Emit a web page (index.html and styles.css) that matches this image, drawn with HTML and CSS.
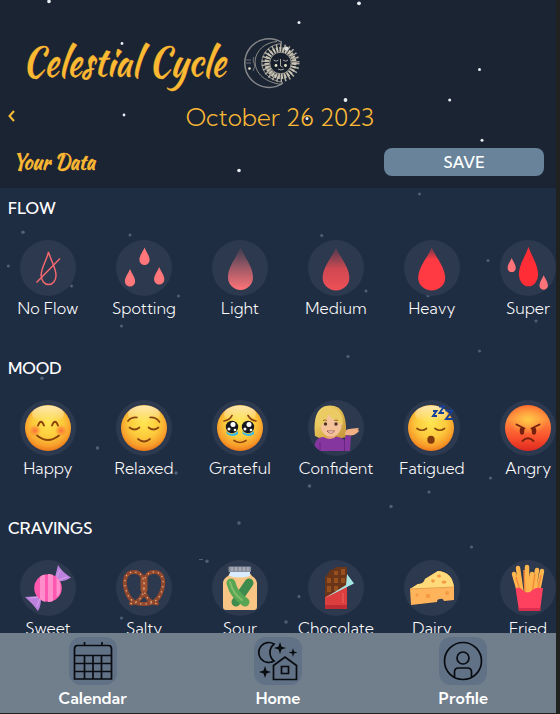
FILE: index.html
```html
<!DOCTYPE html>
<html lang="en">
<head>
<meta charset="utf-8">
<title>Celestial Cycle</title>
<link rel="stylesheet" href="styles.css">
</head>
<body>
<div class="app">
<header class="top">
<svg class="stars" width="556" height="188" fill="#e8edf3"><circle cx="49" cy="1.500" r="1.8"/><circle cx="299" cy="22.500" r="1.500"/><circle cx="122" cy="43.500" r="1.400"/><circle cx="124" cy="115" r="1.400"/><circle cx="239" cy="170.500" r="1.800"/><circle cx="359" cy="3.300" r="1.900"/><circle cx="479.500" cy="69.500" r="1.500"/><circle cx="345.500" cy="100" r="1.900"/><circle cx="449.700" cy="100" r="1.500"/><circle cx="307" cy="118.500" r="1.500"/><circle cx="482" cy="140.300" r="1.500"/></svg>
<div class="brand">
<svg class="wordmark" width="206" height="60" viewBox="0 0 206 60"><text x="-1.500" y="43" font-size="40" textLength="203" lengthAdjust="spacingAndGlyphs">Celestial Cycle</text></svg>
<svg class="logo" width="60" height="54" viewBox="0 0 60 54" fill="none" stroke="#85868a">
<path d="M40 6.500A24.300 24.300 0 1 0 41 47" stroke-width="1.500"/><path d="M35 5.500C7 8 3 44 40 48.500M40 7.500C15 9 11 42 41 46.500" stroke="#aaa79c" stroke-width=".8"/>
<path d="M4 24h5M4 27h5M12 21q-2 3 0 6t-1 8" stroke-width=".8"/><circle cx="7.500" cy="32.500" r="1.300" fill="#e9e8c8" stroke="none"/>
<circle cx="38.500" cy="27" r="15.500" fill="#1b2433" stroke="#b5b0a2" stroke-width="7" stroke-dasharray="1.300 2.500"/><circle cx="38.500" cy="27" r="13.500" stroke="#c8c3b2" stroke-width="5" stroke-dasharray="1.900 1.200"/><circle cx="38.500" cy="27" r="10.800" fill="#171f2c" stroke="#a8a497"/>
<path d="M31.500 24q3 2.500 5 0M41 24q3 2.500 5 0M38.500 23v7l2 1M36 33q3 2 6 0" stroke="#aaa79c"/><circle cx="34" cy="29.500" r="1.400" fill="#e9e8c8" stroke="none"/><circle cx="43.500" cy="29.500" r="1.400" fill="#e9e8c8" stroke="none"/><circle cx="44.500" cy="12.500" r="1.900" fill="#ddd" stroke="none"/></svg>
</div>
<div class="date-row"><svg class="back" width="8" height="12" viewBox="0 0 8 12"><path d="M7 1L2.500 6 7 11" fill="none" stroke="#fbbc35" stroke-width="2"/></svg><h1 class="date">October 26 2023</h1></div>
<div class="data-row"><svg class="data-title" width="90" height="28" viewBox="0 0 90 28"><text x="1" y="20.500" font-size="20" textLength="82" lengthAdjust="spacingAndGlyphs">Your Data</text></svg><button class="save">SAVE</button></div>
</header>
<main class="content">
<svg class="stars" width="556" height="445" fill="#506078"><g transform="translate(0 -188)"><circle cx="23" cy="232.300" r="1.800"/><circle cx="130" cy="235" r="1.500"/><circle cx="8.300" cy="266" r="1.500"/><circle cx="71.500" cy="286" r="1.500"/><circle cx="178.500" cy="296" r="1.500"/><circle cx="121.500" cy="326" r="1.500"/><circle cx="419.500" cy="194" r="1.500"/><circle cx="321.700" cy="235.500" r="1.500"/><circle cx="488" cy="260.500" r="1.500"/><circle cx="366" cy="291" r="1.500"/><circle cx="428" cy="295.500" r="1.800"/><circle cx="536" cy="321" r="1.500"/><circle cx="42" cy="378.300" r="1.700"/><circle cx="97.500" cy="448" r="1.700"/><circle cx="176" cy="473" r="1.700"/><circle cx="25" cy="465" r="1.500"/><circle cx="348" cy="356.500" r="1.600"/><circle cx="479.500" cy="351" r="1.500"/><circle cx="309.500" cy="486" r="1.800"/><circle cx="429" cy="492" r="1.600"/><circle cx="490.500" cy="478" r="1.600"/><circle cx="239" cy="523" r="1.800"/><circle cx="207" cy="561.300" r="1.700"/><rect x="199" y="559" width="4" height="1"/><circle cx="121.500" cy="618" r="1.500"/><circle cx="391" cy="506.500" r="1.700"/><circle cx="471.500" cy="547" r="1.600"/><circle cx="299" cy="596.500" r="1.500"/><circle cx="359" cy="577" r="1.700"/><circle cx="286" cy="622" r="1.700"/></g></svg>
<svg width="0" height="0" class="defs"><defs>
<linearGradient id="light" x1="0" y1="0" x2="0" y2="1"><stop offset="0" stop-color="#ff7479" stop-opacity=".05"/><stop offset=".5" stop-color="#ff7479" stop-opacity=".55"/><stop offset="1" stop-color="#ff7479"/></linearGradient>
<linearGradient id="medium" x1="0" y1="0" x2="0" y2="1"><stop offset="0" stop-color="#e24a52" stop-opacity=".15"/><stop offset=".5" stop-color="#e24a52" stop-opacity=".9"/><stop offset="1" stop-color="#ee5057"/></linearGradient>
<linearGradient id="heavy" x1="0" y1="0" x2="0" y2="1"><stop offset="0" stop-color="#ff3a43" stop-opacity=".25"/><stop offset=".28" stop-color="#ff3a43"/></linearGradient>
<radialGradient id="face" cx=".5" cy=".38" r=".66"><stop offset="0" stop-color="#ffe650"/><stop offset=".5" stop-color="#fcca3c"/><stop offset=".8" stop-color="#f79a29"/><stop offset="1" stop-color="#ea6815"/></radialGradient>
<linearGradient id="shine" x1="0" y1="0" x2="0" y2="1"><stop offset="0" stop-color="#fff" stop-opacity=".6"/><stop offset="1" stop-color="#fff" stop-opacity="0"/></linearGradient>
<linearGradient id="rage" x1="0" y1="0" x2="0" y2="1"><stop offset="0" stop-color="#ff6a30"/><stop offset=".3" stop-color="#ff8c3c"/><stop offset=".7" stop-color="#f9522e"/><stop offset="1" stop-color="#df281f"/></linearGradient>
<radialGradient id="glow"><stop offset="0" stop-color="#ffd54a" stop-opacity=".85"/><stop offset="1" stop-color="#ffd54a" stop-opacity="0"/></radialGradient>
<radialGradient id="blush"><stop offset="0" stop-color="#ff5933" stop-opacity=".8"/><stop offset="1" stop-color="#ff5933" stop-opacity="0"/></radialGradient>
<linearGradient id="hair" x1="0" y1="0" x2="1" y2="1"><stop offset="0" stop-color="#f7df78"/><stop offset=".5" stop-color="#dfb84f"/><stop offset="1" stop-color="#c1923a"/></linearGradient>
<path id="drop" d="M0-21.500C4-11 12.500-2 12.500 9A12.500 12.500 0 0 1-12.500 9C-12.500-2-4-11 0-21.500Z"/>
<path id="knot" d="M15 43.500C22 43 28 36 28 28 29 18 25 12 18 12 8 12 7 23 11 33 14 41 20 44 28 44 36 44 42 41 45 33 49 23 48 12 38 12 31 12 27 18 28 28 28 36 34 43 41 43.500"/>
<g id="head"><circle cx="28" cy="28" r="23" fill="url(#face)"/><ellipse cx="28" cy="14" rx="16" ry="8.500" fill="url(#shine)"/></g>
</defs></svg>
<section class="group"><h2>FLOW</h2><div class="items">
<div class="item"><svg class="disc" viewBox="0 0 56 56"><path d="M28.500 12C31 21 36 28 36 35.500a7.300 9 0 0 1-14.800 0C21 28 26.500 21 28.500 12ZM16.500 42.500L40 18.500" fill="none" stroke="#f4676f" stroke-width="1.500"/></svg><span>No Flow</span></div>
<div class="item"><svg class="disc" viewBox="0 0 56 56" fill="#ff777b"><use href="#drop" transform="translate(28.500 16.300) scale(.41)"/><use href="#drop" transform="translate(14 37.800) scale(.41)"/><use href="#drop" transform="translate(43.200 35.700) scale(.41)"/></svg><span>Spotting</span></div>
<div class="item"><svg class="disc" viewBox="0 0 56 56" fill="url(#light)"><use href="#drop" x="28.500" y="28.500"/></svg><span>Light</span></div>
<div class="item"><svg class="disc" viewBox="0 0 56 56" fill="url(#medium)"><use href="#drop" transform="translate(28 29) scale(1.070 1)"/></svg><span>Medium</span></div>
<div class="item"><svg class="disc" viewBox="0 0 56 56" fill="url(#heavy)"><use href="#drop" transform="translate(27.700 29) scale(1.080 1)"/></svg><span>Heavy</span></div>
<div class="item"><svg class="disc" viewBox="0 0 56 56" fill="#ff7379"><use href="#drop" transform="translate(28.500 26.500) scale(.77 .92)" fill="#ff2d36"/><use href="#drop" transform="translate(11.700 25) scale(.33)"/><use href="#drop" transform="translate(43.700 42.500) scale(.34)"/></svg><span>Super</span></div>
</div></section>
<section class="group"><h2>MOOD</h2><div class="items">
<div class="item"><svg class="disc" viewBox="0 0 56 56"><use href="#head"/><circle cx="15" cy="30.500" r="6" fill="url(#blush)"/><circle cx="41" cy="30.500" r="6" fill="url(#blush)"/><path d="M18 25.500q3-7.500 6 0M32 25.500q3-7.500 6 0M17 35.500q11 9 22 0" fill="none" stroke="#8c4309" stroke-width="1.900" stroke-linecap="round"/></svg><span>Happy</span></div>
<div class="item"><svg class="disc" viewBox="0 0 56 56"><use href="#head"/><path d="M13.500 27.500q5 4 10 0M32.500 27.500q5 4 10 0M22 39q6 5 12 0M12 21q3-4 9-3.500M34 17.500q6-.500 9.500 4.500" fill="none" stroke="#894610" stroke-width="1.700" stroke-linecap="round"/></svg><span>Relaxed</span></div>
<div class="item"><svg class="disc" viewBox="0 0 56 56"><use href="#head"/><path d="M14 31q5.500 6 12 0v3q-5 4-11 0zM30 31q6 6 12 0v3q-5 4-11 0z" fill="#38bce9"/><circle cx="20" cy="27" r="6.200" fill="#18191e"/><circle cx="36" cy="27" r="6.200" fill="#18191e"/><g fill="#fff"><circle cx="21" cy="24.500" r="2.500"/><circle cx="37" cy="24.500" r="2.500"/><circle cx="17" cy="29" r="1.500"/><circle cx="23" cy="30" r="1.300"/><circle cx="33" cy="29" r="1.500"/><circle cx="39" cy="30" r="1.300"/></g><path d="M12 21q6-1 8-5.500M36 15.500q3 5 8 5.500M22 40.500q6 4 12 0" fill="none" stroke="#894610" stroke-width="1.700" stroke-linecap="round"/></svg><span>Grateful</span></div>
<div class="item"><svg class="disc" viewBox="0 0 56 56"><path d="M7 36C5 18 9 5.500 22 5.500S39 17 38 37Q21 43 7 36Z" fill="url(#hair)"/><path d="M19 32h8v8h-8z" fill="#e6a277"/><ellipse cx="23" cy="25.500" rx="10.500" ry="11" fill="#f5c399"/><path d="M10 27C18 24 20 18 20 13q4 8 15 12C35 10 27 7 19 8S9 19 10 27Z" fill="#ebcb64"/><circle cx="17.500" cy="24" r="1.700" fill="#4e3428"/><circle cx="28" cy="24" r="1.700" fill="#4e3428"/><path d="M15 20.500q2-1 4 0M26 20.500q2-1 4 0" fill="none" stroke="#9c6a36"/><path d="M19 31q4 4.500 7.500 0Z" fill="#fff" stroke="#9c4136" stroke-width=".8"/><path d="M6.500 51q-1-14 9-14 7 4 13-.500 6 1 8 4l1-5 5.500.500-1 15Z" fill="#85369f"/><path d="M12 42v9M36.500 40v11" stroke="#6a247f"/><path d="M37 35q0-6 4-6l9-1q2 1-1 2 4 0 0 3-2 2-6 2.500Z" fill="#f2b184"/></svg><span>Confident</span></div>
<div class="item"><svg class="disc" viewBox="0 0 56 56"><g transform="translate(-1)"><use href="#head"/><path d="M14 28.500q5 3.500 9.500 0M32 28.500q5 3.500 9.500 0" fill="none" stroke="#894610" stroke-width="1.700" stroke-linecap="round"/></g><ellipse cx="27" cy="39.700" rx="3.700" ry="4" fill="#843b0b"/><path d="M29 11h3.500L29 16h4M35 6.500h5L35.500 13H40M41.500 10.500h7L42 19h7" fill="none" stroke="#173f9c" stroke-width="1.900"/></svg><span>Fatigued</span></div>
<div class="item"><svg class="disc" viewBox="0 0 56 56"><circle cx="28" cy="28" r="23" fill="url(#rage)"/><ellipse cx="28" cy="20" rx="20" ry="15" fill="url(#glow)"/><path d="M16.500 24.500l8 4M39.500 24.500l-8 4M22.500 41q5.500-5.500 11 0" fill="none" stroke="#76210f" stroke-width="1.900" stroke-linecap="round"/><ellipse cx="22" cy="31" rx="2.300" ry="3.700" fill="#76210f"/><ellipse cx="34" cy="31" rx="2.300" ry="3.700" fill="#76210f"/></svg><span>Angry</span></div>
</div></section>
<section class="group"><h2>CRAVINGS</h2><div class="items">
<div class="item"><svg class="disc" viewBox="0 0 56 56"><path d="M35 17L38 5q4 7 13 12.500-5 3.500-12 4ZM20 36l-15 1q7 6 13 14 3-5 3-12Z" fill="#bd82dd"/><path d="M36 19l4-9M38 20l9-3M19 37l-9 1M20 38l-3 8" stroke="#d6a5ee" fill="none"/><circle cx="28" cy="28" r="13.800" fill="#ff58b0"/><path d="M20 17q3-3 5-2v27q-3-1-5-3ZM28 14q3 0 5 1v26q-2 1-5 1ZM36.500 17q4 3 4 11t-4 9Z" fill="#ff8dcc"/></svg><span>Sweet</span></div>
<div class="item"><svg class="disc" viewBox="0 0 56 56" fill="none" stroke-linecap="round"><use href="#knot" stroke="#92482d" stroke-width="4"/><path d="M28 20v9" stroke="#a0502f" stroke-width="7"/><use href="#knot" stroke="#e9b78e" stroke-width="1.300" stroke-dasharray=".2 5"/></svg><span>Salty</span></div>
<div class="item"><svg class="disc" viewBox="0 0 56 56"><path d="M19 12h18l3 4q5 3 5 7v24q0 3-3 3H14q-3 0-3-3V23q0-4 5-7Z" fill="#f9c584"/><path d="M18 12h20v4q-10 3-21 0Z" fill="#d9ecff"/><rect x="16.500" y="6.500" width="22.500" height="5.500" rx="1" fill="#8c91a0"/><path d="M20 7v4M24 7v4M28 7v4M32 7v4M36 7v4" stroke="#bcc0cc"/><path d="M37 23L24 42" stroke="#3d8c4d" stroke-width="9" stroke-linecap="round"/><path d="M19 23q3 12 14 19" fill="none" stroke="#58a553" stroke-width="9" stroke-linecap="round"/><path d="M18 22q3 12 12 18" fill="none" stroke="#82bd6b" stroke-width="2" stroke-linecap="round"/></svg><span>Sour</span></div>
<div class="item"><svg class="disc" viewBox="0 0 56 56"><path d="M17 17l3-3 2-4 4-1 2-2h11v31H17Z" fill="#6b3519"/><path d="M19 18h4v5h-4zM26 11h4v4h-4zM33 9h4v6h-4zM26 18h4v5h-4zM33 18h4v5h-4zM19 26h4v6h-4zM26 26h4v5h-4z" fill="#99501f"/><path d="M17 37l22-11v23H17Z" fill="#dc3e3d"/><path d="M17 45h22v4H17Z" fill="#bd2c32"/><path d="M35 33v10" stroke="#ef6360"/><path d="M17 38L38 25l1-11 7 9.500Z" fill="#a7e6e4"/></svg><span>Chocolate</span></div>
<div class="item"><svg class="disc" viewBox="0 0 56 56"><path d="M6 29l8-5q6 0 7-5L34 11q14 1 16 16v13l-10 1q-1-3-4-2-3 0-3 3L7 45Z" fill="#ffb45c"/><path d="M6 29l8-5q6 0 7-5L34 11q14 1 16 16Z" fill="#ffda7a"/><path d="M6 29l44-2" stroke="#e3a34f"/><g fill="#f59a43"><circle cx="24" cy="36" r="2.300"/><circle cx="13" cy="35" r="1.600"/><circle cx="43" cy="33" r="2"/><ellipse cx="35" cy="16" rx="2" ry="1.500"/><ellipse cx="40" cy="22" rx="2.500" ry="1.600"/><circle cx="29" cy="21" r="1.800"/></g></svg><span>Dairy</span></div>
<div class="item"><svg class="disc" viewBox="0 0 56 56"><path d="M14 14l6 21M18 8l4 27M27 7v26M32 14l-3 20M37 10l-4 25M42 11l-5 25" stroke="#ffb64f" stroke-width="4.500" stroke-linecap="round"/><path d="M16 17l5 17M24 10l1 24M35 14l-3 20M41 15l-4 18" stroke="#f58a3c" stroke-width="1.500"/><path d="M15.500 28q5-1 7 2 5 5 10 0 3-3 10.500-2l-3 23H19Z" fill="#ff4160"/><path d="M18.500 48h22l-.500 3H19Z" fill="#d92e4d"/></svg><span>Fried</span></div>
</div></section>
</main>
<nav class="tabs">
<a class="tab"><svg class="tab-icon" viewBox="0 0 48 48"><path d="M5.500 18V12q0-3.500 3-3.500h31q3 0 3 3.500v6M5.500 18.500h37V42h-37ZM5.500 26.500h37M5.500 34.500h37M15.500 18v24M24 18v24M32.500 18v24M15.500 5v4M33 5v4"/></svg><span>Calendar</span></a>
<a class="tab"><svg class="tab-icon" viewBox="0 0 48 48"><path d="M20 7A10 10 0 1 0 20 24 11 11 0 0 1 20 7ZM19.500 42.500V28.500L31 20l11.500 8.500v14ZM27.500 29.500h7v7h-7Z"/><path d="M26 5l1.500 4.500L32 11l-4.500 1.500L26 17l-1.500-4.500L20 11l4.500-1.500ZM39 11l1 3.500 3.500 1-3.500 1-1 3.500-1-3.500-3.500-1 3.500-1ZM11 29l1.500 4.500L17 35l-4.500 1.500L11 41l-1.500-4.500L5 35l4.500-1.500Z" fill="#080b10" stroke="none"/></svg><span>Home</span></a>
<a class="tab"><svg class="tab-icon" viewBox="0 0 48 48"><circle cx="24" cy="24" r="18.500"/><circle cx="24" cy="21" r="6"/><path d="M15.500 40v-5q0-4 4-4h9q4 0 4 4v5"/></svg><span>Profile</span></a>
</nav>
</div>
</body>
</html>
```
FILE: styles.css
```css
* { box-sizing: border-box; }
body {
  margin: 0;
  height: 714px;
  overflow: hidden;
  background: #20221f;
  font-family: "Kumbh Sans", Lato, sans-serif;
  color: #fff;
}
.app { width: 556px; height: 713px; display: flex; flex-direction: column; background: #1f2d43; }
.top { position: relative; height: 188px; background: #1b2433; }
.stars { position: absolute; left: 0; top: 0; }
.defs { position: absolute; }
.brand, .date-row, .data-row { position: relative; display: flex; align-items: center; }
.brand { height: 96px; padding: 29px 0 0 24px; gap: 12px; }
.wordmark text, .data-title text {
  font-family: "Kaushan Script", cursive;
  font-weight: 400;
  fill: #fcb932;
}
.wordmark text { stroke: #fcb932; stroke-width: .3px; }
.data-title text { stroke: #fcb932; stroke-width: .6px; }
.wordmark, .data-title { overflow: visible; }
.date-row { height: 40px; padding-left: 7px; }
.date { flex: 1; margin: 0 0 0 -11px; text-align: center; color: #fbb936; font-size: 24px; font-weight: 300; line-height: 40px; padding-top: 1px; }
.back { flex: none; }
.data-row { height: 28px; margin-top: 12px; padding: 0 12px; justify-content: space-between; }
.save { width: 160px; height: 28px; border: 0; border-radius: 8px; background: #69839b; color: #fff; font-family: inherit; font-weight: 500; font-size: 16px; line-height: 28px; padding: 0; }
.content { position: relative; height: 445px; overflow: hidden; }
.group { position: relative; height: 160px; }
.group h2 { margin: 0; padding: 8px 8px 0; height: 52px; font-size: 16px; line-height: 24px; font-weight: 500; }
.items { display: flex; }
.item { flex: 0 0 96px; display: flex; flex-direction: column; align-items: center; }
.disc { width: 56px; height: 56px; border-radius: 50%; background: #2c394e; }
.item span { font-size: 16px; line-height: 24px; font-weight: 300; white-space: nowrap; }
.tabs { height: 80px; display: flex; background: #717e8c; }
.tab { flex: 1; display: flex; flex-direction: column; align-items: center; padding-top: 4px; }
.tab-icon { width: 48px; height: 48px; border-radius: 12px; background: #617286; fill: none; stroke: #080b10; stroke-width: 1.7; }
.tab span { font-size: 16px; line-height: 26px; font-weight: 600; }
```
